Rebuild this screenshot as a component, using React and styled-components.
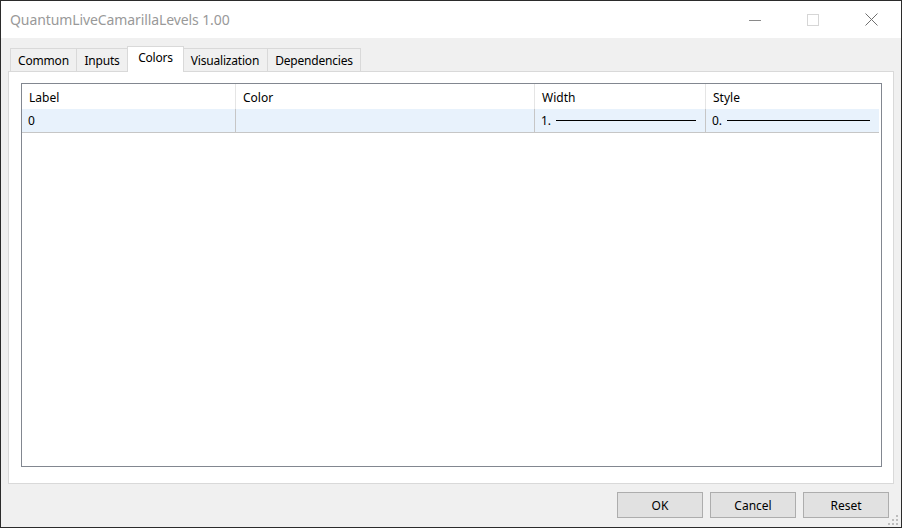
import React from "react";
import styled, { createGlobalStyle } from "styled-components";

const Global = createGlobalStyle`
  html, body { margin: 0; padding: 0; background: #ffffff; }
  body { font-family: "Noto Sans", "Open Sans", "Liberation Sans", sans-serif; }
  * { box-sizing: border-box; }
`;

const Window = styled.div`
  width: 902px;
  height: 528px;
  border: 1px solid #2b2b2b;
  display: flex;
  flex-direction: column;
  background: #f0f0f0;
  overflow: hidden;
`;

const TitleBar = styled.div`
  height: 37px;
  background: #ffffff;
  display: flex;
  align-items: center;
  padding-left: 9px;
  flex-shrink: 0;
`;

const Title = styled.div`
  flex: 1;
  color: #999999;
  font-size: 14px;
  letter-spacing: -0.1px;
`;

const Controls = styled.div`
  display: flex;
  height: 100%;
  padding-right: 1px;
`;

const CtrlBtn = styled.div`
  width: 58px;
  display: flex;
  align-items: center;
  justify-content: center;
`;

const Body = styled.div`
  flex: 1;
  display: flex;
  flex-direction: column;
  padding: 8px 7px 0 7px;
  position: relative;
`;

const TabStrip = styled.div`
  display: flex;
  align-items: flex-end;
  height: 26px;
  margin-left: 2px;
  position: relative;
  z-index: 1;
  margin-bottom: -1px;
`;

const Tab = styled.div`
  width: ${(p) => p.$w}px;
  flex-shrink: 0;
  height: ${(p) => (p.$active ? "26px" : "24px")};
  margin: 0 ${(p) => (p.$active ? "-1px" : "0")};
  border: 1px solid #d9d9d9;
  border-left: ${(p) => (p.$first || p.$active ? "1px solid #d9d9d9" : "none")};
  border-bottom: ${(p) => (p.$active ? "none" : "1px solid #d9d9d9")};
  background: ${(p) => (p.$active ? "#ffffff" : "#f0f0f0")};
  position: relative;
  z-index: ${(p) => (p.$active ? 2 : 1)};
  font-size: 12px;
  letter-spacing: -0.2px;
  color: #000;
  display: flex;
  justify-content: center;
  align-items: ${(p) => (p.$active ? "flex-start" : "center")};
  padding-top: ${(p) => (p.$active ? "2px" : "0")};
  white-space: nowrap;
`;

const Panel = styled.div`
  height: 413px;
  background: #ffffff;
  border: 1px solid #d9d9d9;
  padding: 11px 11px 16px 12px;
  display: flex;
`;

const ListBox = styled.div`
  flex: 1;
  border: 1px solid #828790;
  background: #ffffff;
`;

const Row = styled.div`
  display: grid;
  grid-template-columns: 214px 299px 171px 173px;
  height: ${(p) => (p.$header ? "25px" : "24px")};
  background: ${(p) => (p.$header ? "#ffffff" : "#e8f2fc")};
  border-bottom: ${(p) => (p.$header ? "none" : "1px solid #c6c6c6")};
  width: 857px;
`;

const Cell = styled.div`
  font-size: 12px;
  color: #000;
  display: flex;
  align-items: center;
  padding-left: ${(p) => (p.$header ? "7px" : "6px")};
  padding-top: ${(p) => (p.$header ? "1px" : "0")};
  padding-right: 9px;
  border-right: 1px solid ${(p) => (p.$header ? "#e5e5e5" : "#c6c6c6")};
  white-space: nowrap;
  &:last-child { border-right: none; }
`;

const LineSample = styled.div`
  flex: 1;
  height: 1px;
  background: #000;
  margin-left: 5px;
`;

const Footer = styled.div`
  display: flex;
  justify-content: flex-end;
  gap: 7px;
  padding: 8px 5px 0 0;
`;

const Button = styled.div`
  width: 86px;
  height: 26px;
  background: #e1e1e1;
  border: 1px solid #adadad;
  font-size: 12px;
  color: #000;
  display: flex;
  align-items: center;
  justify-content: center;
`;

const Grip = styled.svg`
  position: absolute;
  right: 2px;
  bottom: 1px;
`;

const tabs = [
  { t: "Common", w: 67 },
  { t: "Inputs", w: 51 },
  { t: "Colors", w: 57 },
  { t: "Visualization", w: 85 },
  { t: "Dependencies", w: 93 },
];

export default function App() {
  return (
    <>
      <Global />
      <Window>
        <TitleBar>
          <Title>QuantumLiveCamarillaLevels 1.00</Title>
          <Controls>
            <CtrlBtn>
              <svg width="12" height="12" viewBox="0 0 12 12">
                <line x1="0" y1="6.5" x2="12" y2="6.5" stroke="#8a8a8a" strokeWidth="1" />
              </svg>
            </CtrlBtn>
            <CtrlBtn>
              <svg width="12" height="12" viewBox="0 0 12 12">
                <rect x="0.5" y="0.5" width="11" height="11" fill="none" stroke="#d6d6d6" strokeWidth="1" />
              </svg>
            </CtrlBtn>
            <CtrlBtn>
              <svg width="13" height="13" viewBox="0 0 13 13">
                <path d="M0.5 0.5 L12.5 12.5 M12.5 0.5 L0.5 12.5" stroke="#6f6f6f" strokeWidth="1" />
              </svg>
            </CtrlBtn>
          </Controls>
        </TitleBar>
        <Body>
          <TabStrip>
            {tabs.map((x, i) => (
              <Tab key={x.t} $w={x.w} $active={x.t === "Colors"} $first={i === 0}>
                {x.t}
              </Tab>
            ))}
          </TabStrip>
          <Panel>
            <ListBox>
              <Row $header>
                <Cell $header>Label</Cell>
                <Cell $header>Color</Cell>
                <Cell $header>Width</Cell>
                <Cell $header>Style</Cell>
              </Row>
              <Row>
                <Cell>0</Cell>
                <Cell></Cell>
                <Cell>
                  1.<LineSample />
                </Cell>
                <Cell>
                  0.<LineSample />
                </Cell>
              </Row>
            </ListBox>
          </Panel>
          <Footer>
            <Button>OK</Button>
            <Button>Cancel</Button>
            <Button>Reset</Button>
          </Footer>
          <Grip width="11" height="11" viewBox="0 0 11 11">
            <g fill="#bdbdbd">
              <rect x="8" y="0" width="2" height="2" />
              <rect x="4" y="4" width="2" height="2" />
              <rect x="8" y="4" width="2" height="2" />
              <rect x="0" y="8" width="2" height="2" />
              <rect x="4" y="8" width="2" height="2" />
              <rect x="8" y="8" width="2" height="2" />
            </g>
          </Grip>
        </Body>
      </Window>
    </>
  );
}
